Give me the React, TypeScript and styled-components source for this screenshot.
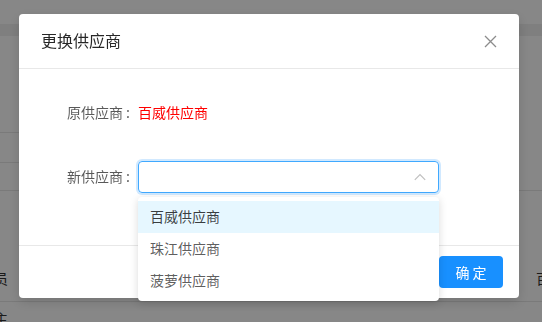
import styled, { createGlobalStyle } from "styled-components";

const GlobalStyle = createGlobalStyle`
  html, body {
    margin: 0;
    padding: 0;
    background: #fff;
  }
  body {
    font-family: "Noto Sans CJK SC", "Noto Sans", sans-serif;
    font-size: 14px;
    color: rgba(0, 0, 0, 0.65);
    overflow: hidden;
  }
`;

const suppliers = ["百威供应商", "珠江供应商", "菠萝供应商"];

function CloseIcon() {
  return (
    <svg width="13" height="13" viewBox="0 0 13 13">
      <path
        d="M1 1 L12 12 M12 1 L1 12"
        stroke="#8c8c8c"
        strokeWidth="1.3"
        fill="none"
      />
    </svg>
  );
}

function ArrowUp() {
  return (
    <svg width="12" height="8" viewBox="0 0 12 8">
      <path
        d="M0.8 6.8 L6 1.6 L11.2 6.8"
        stroke="#bfbfbf"
        strokeWidth="1.2"
        fill="none"
      />
    </svg>
  );
}

function BackgroundPage() {
  return (
    <Page>
      <TopBar />
      <Band />
      <Middle>
        <SideCol>
          <SideCell $h={97} />
          <SideCell $h={30} />
          <SideCell $h={27} />
        </SideCol>
      </Middle>
      <TableRow $h={64} />
      <TableRow $h={47} $line>
        <EdgeText $side="left">员</EdgeText>
        <EdgeText $side="right">百</EdgeText>
      </TableRow>
      <TableRow $h={32}>
        <EdgeText $side="left">主</EdgeText>
      </TableRow>
    </Page>
  );
}

export default function App() {
  return (
    <>
      <GlobalStyle />
      <BackgroundPage />
      <Mask>
        <Dialog>
          <Header>
            <Title>更换供应商</Title>
            <CloseButton>
              <CloseIcon />
            </CloseButton>
          </Header>
          <Body>
            <FormRow>
              <Label>
                原供应商<Colon>:</Colon>
              </Label>
              <OldValue>百威供应商</OldValue>
            </FormRow>
            <FormRow>
              <Label>
                新供应商<Colon>:</Colon>
              </Label>
              <SelectWrap>
                <SelectBox>
                  <ArrowUp />
                </SelectBox>
                <Dropdown>
                  {suppliers.map((name, i) => (
                    <Option key={name} $active={i === 0}>
                      {name}
                    </Option>
                  ))}
                </Dropdown>
              </SelectWrap>
            </FormRow>
          </Body>
          <Footer>
            <PrimaryButton>确 定</PrimaryButton>
          </Footer>
        </Dialog>
      </Mask>
    </>
  );
}

const Page = styled.div`
  height: 322px;
  overflow: hidden;
  display: flex;
  flex-direction: column;
  background: #fff;
  & > * {
    flex-shrink: 0;
  }
`;

const TopBar = styled.div`
  height: 24px;
  background: #fff;
`;

const Band = styled.div`
  height: 12px;
  background: #f0f0f0;
`;

const Middle = styled.div`
  height: 154px;
  display: flex;
  border-bottom: 1px solid #e6e6e6;
`;

const SideCol = styled.div`
  width: 19px;
  display: flex;
  flex-direction: column;
`;

const SideCell = styled.div<{ $h: number }>`
  height: ${(p) => p.$h}px;
  border-bottom: 1px solid #e6e6e6;
  box-sizing: border-box;
  &:last-child {
    border-bottom: none;
  }
`;

const TableRow = styled.div<{ $h: number; $line?: boolean }>`
  height: ${(p) => p.$h}px;
  box-sizing: border-box;
  display: flex;
  align-items: center;
  justify-content: space-between;
  border-bottom: ${(p) => (p.$line ? "1px solid #e6e6e6" : "none")};
`;

const EdgeText = styled.span<{ $side: "left" | "right" }>`
  font-size: 14px;
  line-height: 20px;
  color: #333;
  margin-left: ${(p) => (p.$side === "left" ? "-6px" : "0")};
  margin-right: ${(p) => (p.$side === "right" ? "-8px" : "0")};
`;

const Mask = styled.div`
  position: fixed;
  inset: 0;
  background: rgba(0, 0, 0, 0.47);
  padding: 14px 0 0 19px;
`;

const Dialog = styled.div`
  width: 500px;
  background: #fff;
  border-radius: 4px;
  box-shadow: 0 4px 12px rgba(0, 0, 0, 0.15);
  position: relative;
`;

const Header = styled.div`
  display: flex;
  align-items: center;
  justify-content: space-between;
  padding: 16px 22px 16px 22px;
  border-bottom: 1px solid #e8e8e8;
`;

const Title = styled.div`
  font-size: 16px;
  line-height: 21px;
  color: rgba(0, 0, 0, 0.85);
  margin-bottom: 1px;
`;

const CloseButton = styled.div`
  display: flex;
  align-items: center;
`;

const Body = styled.div`
  padding: 24px 24px 48px;
  display: flex;
  flex-direction: column;
  gap: 24px;
`;

const FormRow = styled.div`
  height: 40px;
  display: flex;
  align-items: center;
`;

const Label = styled.div`
  width: 95px;
  text-align: right;
  line-height: 20px;
  margin-bottom: 2px;
  color: rgba(0, 0, 0, 0.65);
  flex-shrink: 0;
`;

const Colon = styled.span`
  margin: 0 8px 0 3px;
`;

const OldValue = styled.div`
  color: #ff0000;
  line-height: 20px;
  margin-bottom: 2px;
`;

const SelectWrap = styled.div`
  position: relative;
  width: 301px;
`;

const SelectBox = styled.div`
  height: 32px;
  box-sizing: border-box;
  border: 1px solid #40a9ff;
  border-radius: 4px;
  box-shadow: 0 0 0 2px rgba(24, 144, 255, 0.2);
  display: flex;
  align-items: center;
  justify-content: flex-end;
  padding-right: 12px;
`;

const Dropdown = styled.div`
  position: absolute;
  top: 36px;
  left: 0;
  right: 0;
  z-index: 10;
  background: #fff;
  border-radius: 4px;
  padding: 4px 0;
  box-shadow: 0 2px 8px rgba(0, 0, 0, 0.15);
`;

const Option = styled.div<{ $active?: boolean }>`
  height: 32px;
  box-sizing: border-box;
  padding: 5px 12px;
  line-height: 20px;
  color: ${(p) => (p.$active ? "rgba(0, 0, 0, 0.75)" : "rgba(0, 0, 0, 0.65)")};
  background: ${(p) => (p.$active ? "#e6f7ff" : "#fff")};
`;

const Footer = styled.div`
  border-top: 1px solid #e8e8e8;
  padding: 10px 16px;
  display: flex;
  justify-content: flex-end;
`;

const PrimaryButton = styled.button`
  width: 64px;
  height: 32px;
  border: none;
  border-radius: 4px;
  background: #1890ff;
  color: #fff;
  font-family: "Noto Sans CJK SC", sans-serif;
  font-size: 14px;
  padding: 0;
`;
